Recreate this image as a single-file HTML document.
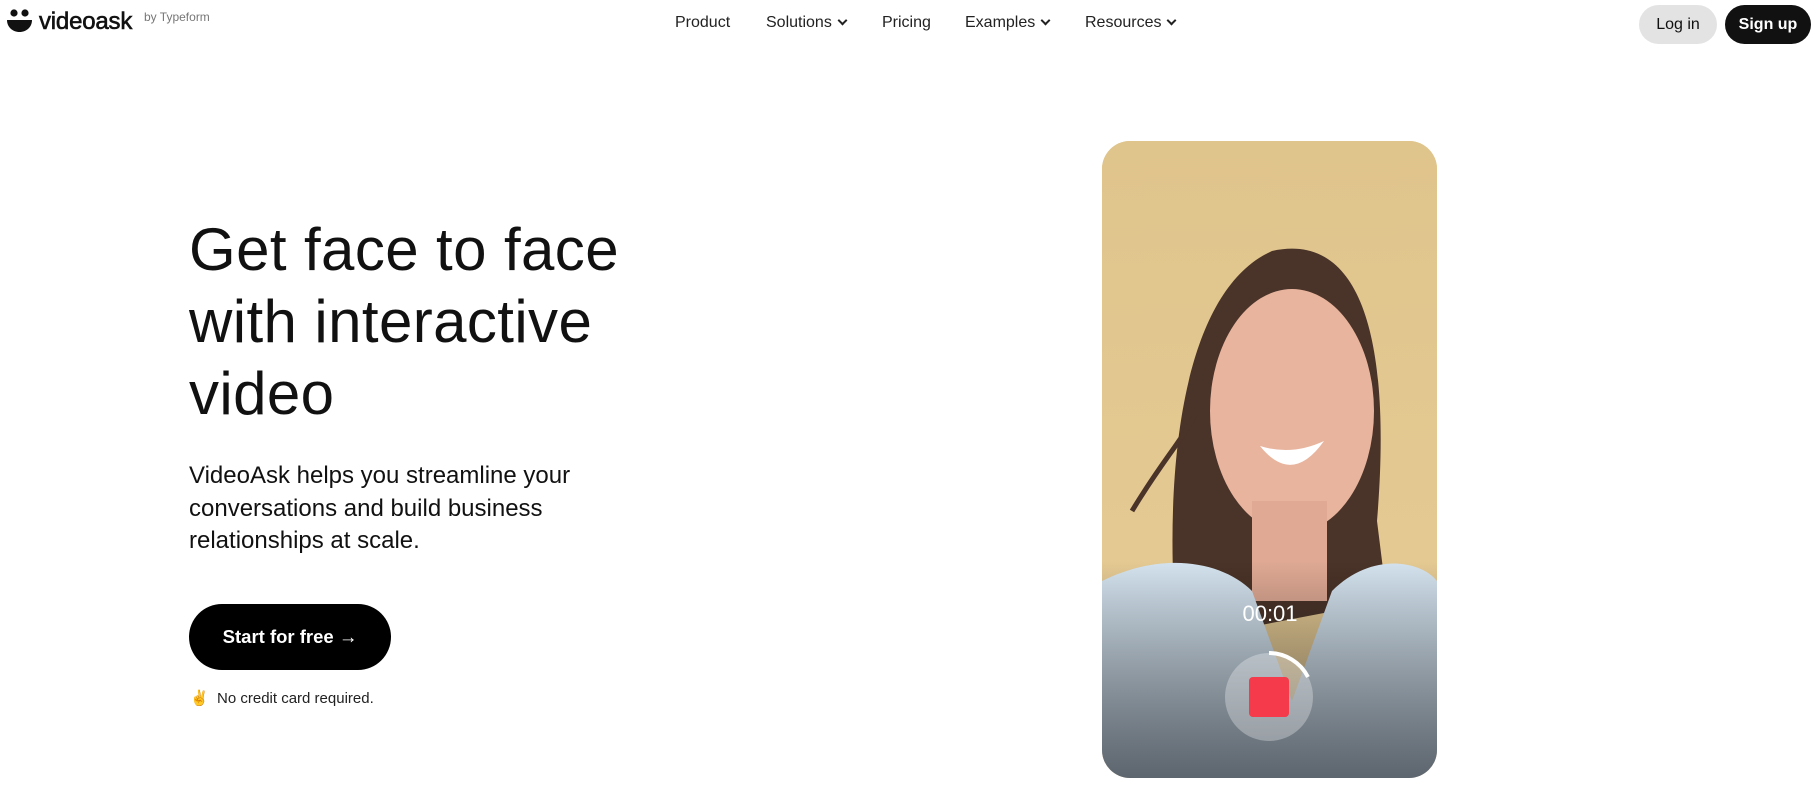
<!DOCTYPE html>
<html><head><meta charset="utf-8"><style>
*{margin:0;padding:0;box-sizing:border-box}
html,body{width:1819px;height:810px;overflow:hidden}
body{background:#fff;font-family:"Liberation Sans",sans-serif;color:#111;position:relative}
.a{position:absolute;white-space:nowrap}
.nav{font-size:16px;top:14px;color:#222}
.chev{display:inline-block;width:7px;height:7px;border-right:2px solid #222;border-bottom:2px solid #222;transform:rotate(45deg);margin-left:7px;position:relative;top:-3px}
h1{position:absolute;left:189px;top:214px;font-size:60px;font-weight:400;line-height:72px;letter-spacing:0.4px}
p.d{position:absolute;left:189px;top:460px;font-size:24px;line-height:32.5px}
</style></head><body>
<svg class="a" style="left:6px;top:8px" width="28" height="26" viewBox="0 0 28 26"><circle cx="8" cy="5" r="3.6" fill="#111"/><circle cx="19" cy="5" r="3.6" fill="#111"/><path d="M1 12h25c0 7-5.5 12-12.5 12S1 19 1 12z" fill="#111"/></svg>
<div class="a" style="left:39px;top:8px;font-size:24px;letter-spacing:-0.2px;-webkit-text-stroke:0.6px #111">videoask</div>
<div class="a" style="left:144px;top:10px;font-size:12px;color:#777">by Typeform</div>
<div class="a nav" style="left:675px">Product</div>
<div class="a nav" style="left:766px">Solutions<span class="chev"></span></div>
<div class="a nav" style="left:882px">Pricing</div>
<div class="a nav" style="left:965px">Examples<span class="chev"></span></div>
<div class="a nav" style="left:1085px">Resources<span class="chev"></span></div>
<div class="a" style="left:1639px;top:5px;width:78px;height:39px;border-radius:20px;background:#e3e3e3;font-size:16px;line-height:39px;text-align:center">Log in</div>
<div class="a" style="left:1725px;top:5px;width:86px;height:39px;border-radius:20px;background:#111;color:#fff;font-size:16px;font-weight:bold;line-height:39px;text-align:center">Sign up</div>
<h1>Get face to face<br>with interactive<br>video</h1>
<p class="d">VideoAsk helps you streamline your<br>conversations and build business<br>relationships at scale.</p>
<div class="a" style="left:189px;top:604px;width:202px;height:66px;border-radius:33px;background:#000;color:#fff;font-size:18.5px;font-weight:bold;line-height:66px;text-align:center">Start for free →</div>
<div class="a" style="left:190px;top:689px;font-size:15px;color:#222">✌️&nbsp; No credit card required.</div>
<div class="a" style="left:1102px;top:141px;width:335px;height:637px;border-radius:28px;overflow:hidden;background:#e4c890">
<svg width="335" height="637" viewBox="0 0 335 637">
<defs><linearGradient id="g" x1="0" y1="0" x2="0" y2="1"><stop offset="0" stop-color="#000" stop-opacity="0"/><stop offset="1" stop-color="#2a3038" stop-opacity=".7"/></linearGradient>
<linearGradient id="w" x1="0" y1="0" x2="0" y2="1"><stop offset="0" stop-color="#dfc48c"/><stop offset="1" stop-color="#e8cc96"/></linearGradient></defs>
<rect width="335" height="637" fill="url(#w)"/>
<path d="M75 500 C60 330 80 150 170 110 C260 90 290 200 275 380 L285 460 L75 500z" fill="#4a3328"/>
<path d="M30 370 C60 320 80 300 95 270" stroke="#4a3328" stroke-width="5" fill="none"/>
<ellipse cx="190" cy="270" rx="82" ry="122" fill="#e8b49e"/>
<rect x="150" y="360" width="75" height="100" fill="#dfa994"/>
<path d="M158 305 Q190 345 222 300 Q190 315 158 305z" fill="#fff"/>
<path d="M0 440 C60 410 120 420 150 450 L190 560 L230 450 C270 410 320 420 335 440 L335 637 L0 637z" fill="#d4e3ef"/>
<rect y="420" width="335" height="217" fill="url(#g)"/>
<text x="168" y="480" fill="#fff" font-family="Liberation Sans" font-size="22" text-anchor="middle">00:01</text>
<circle cx="167" cy="556" r="44" fill="#fff" fill-opacity=".3"/>
<path d="M167 512 A44 44 0 0 1 206 536" stroke="#fff" stroke-width="4" fill="none"/>
<rect x="147" y="536" width="40" height="40" rx="4" fill="#f53a4b"/>
</svg></div>
</body></html>
